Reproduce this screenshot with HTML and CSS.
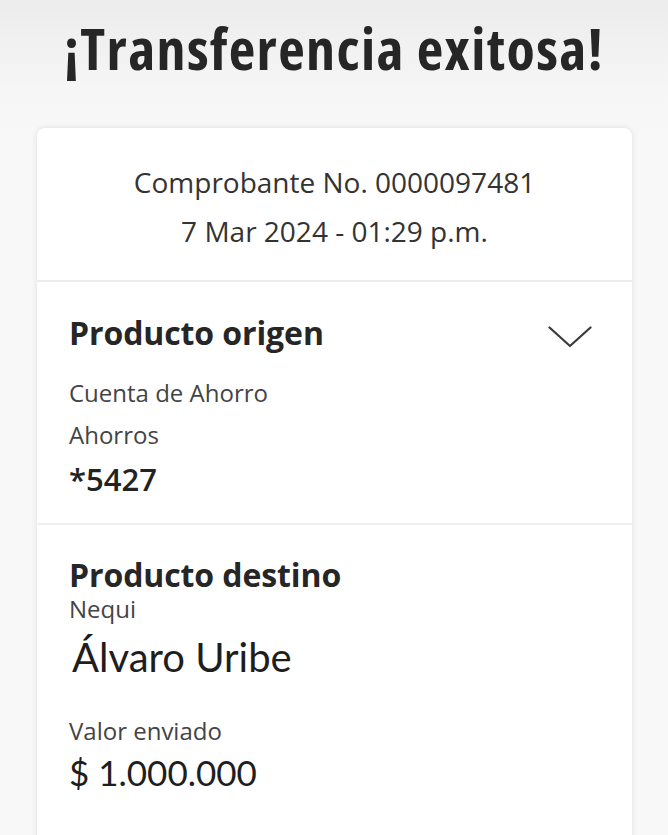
FILE: index.html
```html
<!DOCTYPE html>
<html lang="es">
<head>
<meta charset="utf-8">
<title>Transferencia exitosa</title>
<link rel="stylesheet" href="styles.css">
</head>
<body>
<div class="page">
  <header class="hero">
    <h1 class="title">¡Transferencia exitosa!</h1>
  </header>
  <main class="card">
    <section class="receipt">
      <p class="receipt-line">Comprobante No. 0000097481</p>
      <p class="receipt-line date">7 Mar 2024 - 01:29 p.m.</p>
    </section>
    <section class="block origin">
      <div class="block-head">
        <h2 class="block-title">Producto origen</h2>
        <svg class="chevron" width="44" height="22" viewBox="0 0 44 22" aria-hidden="true">
          <path d="M1.5 1.5 L22 20 L42.5 1.5" fill="none" stroke="#3a3a3a" stroke-width="2.2" stroke-linecap="round" stroke-linejoin="round"/>
        </svg>
      </div>
      <p class="label first">Cuenta de Ahorro</p>
      <p class="label second">Ahorros</p>
      <p class="account">*5427</p>
    </section>
    <section class="block dest">
      <h2 class="block-title">Producto destino</h2>
      <p class="label tight">Nequi</p>
      <p class="name">Álvaro Uribe</p>
      <p class="label value-label">Valor enviado</p>
      <p class="amount">$ 1.000.000</p>
    </section>
  </main>
</div>
</body>
</html>
```

FILE: styles.css
```css
* { box-sizing: border-box; }
html, body { margin: 0; padding: 0; }
body {
  width: 668px;
  height: 835px;
  overflow: hidden;
  background: #f7f7f7;
  font-family: "Open Sans", "Noto Sans", sans-serif;
  color: #2b2b2b;
}
.page {
  min-height: 835px;
  background: linear-gradient(to bottom, #ececec 0px, #f6f6f6 90px, #f8f8f8 140px, #f8f8f8 100%);
}
.hero {
  height: 128px;
  padding-top: 9px;
  text-align: center;
}
.title {
  margin: 0;
  font-size: 58px;
  font-weight: 700;
  font-stretch: 87%;
  letter-spacing: 1.4px;
  line-height: 78px;
  color: #262626;
}
.card {
  margin: 0 36px 0 37px;
  background: #fff;
  border-radius: 8px;
  box-shadow: 0 0 6px rgba(0,0,0,0.10);
  height: 720px;
}
.receipt {
  text-align: center;
  padding: 35px 0 0;
  height: 154px;
  border-bottom: 2px solid #ededed;
}
.receipt-line {
  margin: 0;
  font-size: 28px;
  line-height: 38px;
  color: #333;
}
.receipt-line.date {
  margin-top: 11px;
}
.block { padding: 0 32px; }
.origin {
  padding-top: 32px;
  height: 243px;
  border-bottom: 2px solid #f0f0f0;
}
.block-head {
  display: flex;
  justify-content: space-between;
  align-items: center;
}
.chevron { margin-right: 8px; margin-top: 8px; }
.block-title {
  margin: 0;
  font-size: 32px;
  font-weight: 700;
  letter-spacing: -0.1px;
  line-height: 38px;
  color: #262626;
}
.dest .block-title { line-height: 32px; }
.label {
  margin: 0;
  font-size: 24px;
  line-height: 32px;
  color: #444;
}
.label.first { margin-top: 25px; }
.label.second { margin-top: 10px; }
.account {
  margin: 9px 0 0;
  font-size: 31px;
  line-height: 38px;
  font-weight: 600;
  color: #222;
}
.dest { padding-top: 34px; }
.label.tight { margin-top: 3px; line-height: 30px; }
.name {
  margin: 9px 0 0 3px;
  font-family: "Lato", "Inter", sans-serif;
  font-size: 40px;
  line-height: 48px;
  color: #1e1e1e;
}
.label.value-label { margin-top: 34px; }
.amount {
  margin: 4px 0 0;
  font-family: "Lato", "Inter", sans-serif;
  font-size: 35px;
  line-height: 42px;
  color: #1e1e1e;
}
```
